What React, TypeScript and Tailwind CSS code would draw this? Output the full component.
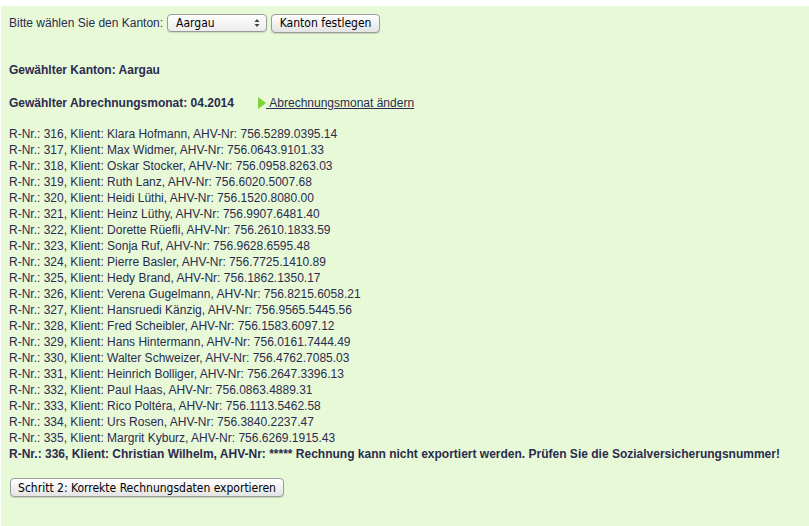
import React from "react";

const rows: [number, string, string][] = [
  [316, "Klara Hofmann", "756.5289.0395.14"],
  [317, "Max Widmer", "756.0643.9101.33"],
  [318, "Oskar Stocker", "756.0958.8263.03"],
  [319, "Ruth Lanz", "756.6020.5007.68"],
  [320, "Heidi Lüthi", "756.1520.8080.00"],
  [321, "Heinz Lüthy", "756.9907.6481.40"],
  [322, "Dorette Rüefli", "756.2610.1833.59"],
  [323, "Sonja Ruf", "756.9628.6595.48"],
  [324, "Pierre Basler", "756.7725.1410.89"],
  [325, "Hedy Brand", "756.1862.1350.17"],
  [326, "Verena Gugelmann", "756.8215.6058.21"],
  [327, "Hansruedi Känzig", "756.9565.5445.56"],
  [328, "Fred Scheibler", "756.1583.6097.12"],
  [329, "Hans Hintermann", "756.0161.7444.49"],
  [330, "Walter Schweizer", "756.4762.7085.03"],
  [331, "Heinrich Bolliger", "756.2647.3396.13"],
  [332, "Paul Haas", "756.0863.4889.31"],
  [333, "Rico Poltéra", "756.1113.5462.58"],
  [334, "Urs Rosen", "756.3840.2237.47"],
  [335, "Margrit Kyburz", "756.6269.1915.43"],
];

const btn =
  "h-[19px] whitespace-nowrap rounded-[4px] border border-[#9a9a9a] bg-gradient-to-b from-white to-[#e4e4e4] text-[12px] leading-none text-black shadow-[0_1px_1px_rgba(0,0,0,0.15)] [font-family:'DejaVu_Sans_Condensed','Liberation_Sans',sans-serif]";

export default function App() {
  return (
    <div className="h-[526px] w-[809px] bg-white pt-[6px] pl-[1px]">
      <div className="h-full bg-[#e8f9d8] pl-[8px] pt-[8px] text-[12px] text-[#2b2b4e] [font-family:'Liberation_Sans',Arial,sans-serif]">
        <div className="flex h-[18px] items-center">
          <span>Bitte wählen Sie den Kanton:</span>
          <div className="ml-[4px] flex h-[18px] w-[100px] items-center justify-between rounded-[4px] border border-[#9a9a9a] bg-gradient-to-b from-white to-[#ececec] pl-[8px] pr-[6px] text-black shadow-[0_1px_1px_rgba(0,0,0,0.12)] [font-family:'DejaVu_Sans_Condensed','Liberation_Sans',sans-serif]">
            <span>Aargau</span>
            <svg width="6" height="10" viewBox="0 0 6 10">
              <path d="M0.5 4 L3 1 L5.5 4 Z" fill="#444" />
              <path d="M0.5 6 L3 9 L5.5 6 Z" fill="#444" />
            </svg>
          </div>
          <button className={btn + " ml-[4px] w-[109px] px-0"}>Kanton festlegen</button>
        </div>

        <div className="mt-[30px] font-bold leading-[16px]">Gewählter Kanton: Aargau</div>

        <div className="mt-[17px] flex items-center leading-[16px]">
          <span className="font-bold">Gewählter Abrechnungsmonat: 04.2014</span>
          <span className="ml-[24px] flex items-center">
            <svg width="8" height="12" viewBox="0 0 8 12">
              <path d="M0 0 L8 6 L0 12 Z" fill="#7ed23a" />
            </svg>
            <a className="underline decoration-[#2b2b4e]" href="#">
              {"\u00a0"}Abrechnungsmonat ändern
            </a>
          </span>
        </div>

        <div className="mt-[15px] leading-[16px]">
          {rows.map(([nr, name, ahv]) => (
            <div key={nr}>
              R-Nr.: {nr}, Klient: {name}, AHV-Nr: {ahv}
            </div>
          ))}
          <div className="font-bold">
            R-Nr.: 336, Klient: Christian Wilhelm, AHV-Nr: ***** Rechnung kann nicht exportiert werden. Prüfen Sie die Sozialversicherungsnummer!
          </div>
        </div>

        <button className={btn + " mt-[16px] ml-[1px] w-[274px]"}>
          Schritt 2: Korrekte Rechnungsdaten exportieren
        </button>
      </div>
    </div>
  );
}
